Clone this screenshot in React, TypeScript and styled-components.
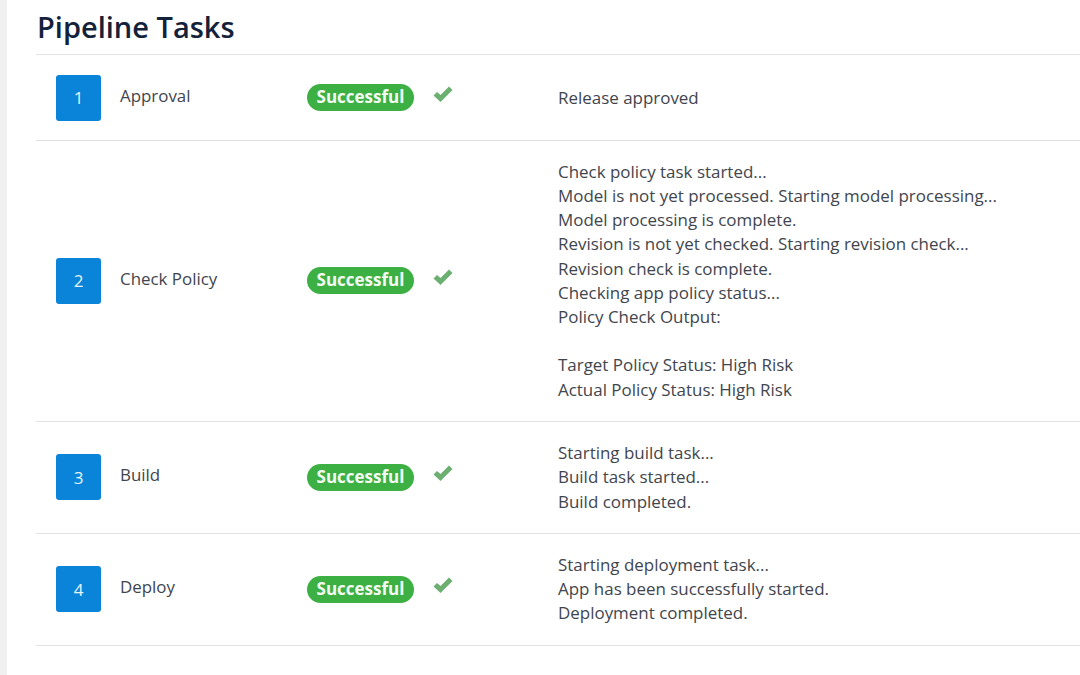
import styled, { createGlobalStyle } from "styled-components";

const GlobalStyle = createGlobalStyle`
  html, body {
    margin: 0;
    padding: 0;
    background: #ffffff;
  }
  body {
    font-family: "Open Sans", "Liberation Sans", sans-serif;
    overflow: hidden;
  }
`;

const Page = styled.div`
  width: 1080px;
  height: 675px;
  display: flex;
  overflow: hidden;
  background: #ffffff;
`;

const SideStrip = styled.div`
  width: 7px;
  flex-shrink: 0;
  background: #f0f0f0;
`;

const Content = styled.main`
  flex: 1;
  min-width: 0;
  padding-left: 29px;
`;

const Title = styled.h1`
  margin: 0;
  height: 54px;
  padding-left: 1px;
  box-sizing: border-box;
  font-size: 29px;
  line-height: 54px;
  font-weight: 600;
  color: #14213a;
`;

const TaskRow = styled.div<{ $single: boolean }>`
  display: grid;
  grid-template-columns: 45px 206px 251px 1fr;
  align-items: center;
  padding: ${({ $single }) => ($single ? "19.5px 0 19.5px 20px" : "18.7px 0 19.7px 20px")};
  border-top: 1px solid #e2e2e2;

  &:last-child {
    border-bottom: 1px solid #e2e2e2;
  }
`;

const NumberTile = styled.div`
  width: 45px;
  height: 46px;
  border-radius: 3px;
  background: #0a84d8;
  color: #e8f4fc;
  font-size: 17px;
  display: flex;
  align-items: center;
  justify-content: center;
`;

const TaskName = styled.div`
  padding: 0 0 4px 19px;
  font-size: 16.9px;
  line-height: 24px;
  color: #41454d;
`;

const StatusCell = styled.div`
  display: flex;
  align-items: center;
`;

const Badge = styled.span`
  flex-shrink: 0;
  width: 107px;
  height: 27px;
  border-radius: 14px;
  background: #3cb043;
  color: #f4fbf4;
  font-size: 17px;
  font-weight: 700;
  line-height: 26px;
  text-align: center;
`;

const Check = styled.svg`
  flex-shrink: 0;
  width: 20px;
  height: 17px;
  margin: 0 0 7px 19px;
`;

const Output = styled.div<{ $single: boolean }>`
  padding-top: ${({ $single }) => ($single ? "1px" : "0")};
  font-size: 16.95px;
  line-height: 24.2px;
  color: #41454d;
  white-space: pre-line;
`;

const tasks = [
  { name: "Approval", output: "Release approved" },
  {
    name: "Check Policy",
    output:
      "Check policy task started...\nModel is not yet processed. Starting model processing...\nModel processing is complete.\nRevision is not yet checked. Starting revision check...\nRevision check is complete.\nChecking app policy status...\nPolicy Check Output:\n\nTarget Policy Status: High Risk\nActual Policy Status: High Risk",
  },
  { name: "Build", output: "Starting build task...\nBuild task started...\nBuild completed." },
  {
    name: "Deploy",
    output: "Starting deployment task...\nApp has been successfully started.\nDeployment completed.",
  },
];

export default function App() {
  return (
    <Page>
      <GlobalStyle />
      <SideStrip />
      <Content>
        <Title>Pipeline Tasks</Title>
        {tasks.map((task, i) => {
          const single = !task.output.includes("\n");
          return (
            <TaskRow key={task.name} $single={single}>
              <NumberTile>{i + 1}</NumberTile>
              <TaskName>{task.name}</TaskName>
              <StatusCell>
                <Badge>Successful</Badge>
                <Check viewBox="0 0 20 17">
                  <path d="M0.5 9.5 L4 6 L7.5 9 L16 0.5 L19.5 4 L7.5 16 Z" fill="#6cb071" />
                </Check>
              </StatusCell>
              <Output $single={single}>{task.output}</Output>
            </TaskRow>
          );
        })}
      </Content>
    </Page>
  );
}
